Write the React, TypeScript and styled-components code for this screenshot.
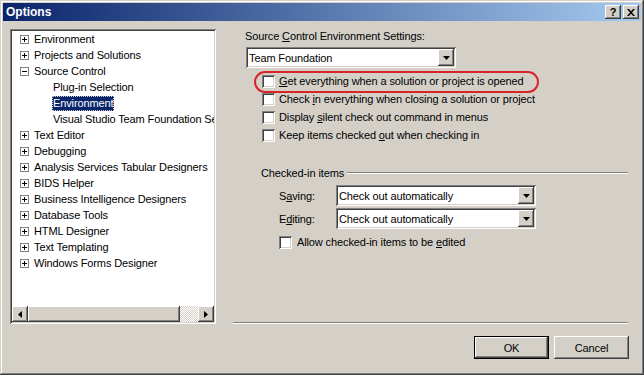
import React from "react";
import styled, { createGlobalStyle, css } from "styled-components";

const Global = createGlobalStyle`
  html, body { margin: 0; padding: 0; background: #d4d0c8; }
  body { font-family: "Liberation Sans", Arial, sans-serif; font-size: 11px; letter-spacing: -0.12px; color: #000; }
  * { box-sizing: border-box; }
`;

const raised = css`
  background: #d4d0c8;
  box-shadow: inset -1px -1px #404040, inset 1px 1px #fff, inset -2px -2px #808080;
`;

const sunken = css`
  box-shadow: inset 1px 1px #808080, inset -1px -1px #fff, inset 2px 2px #404040, inset -2px -2px #d4d0c8;
`;

const Window = styled.div`
  width: 644px;
  height: 375px;
  padding: 3px;
  display: flex;
  flex-direction: column;
  background: #d4d0c8;
  box-shadow: inset -1px -1px #404040, inset 1px 1px #d4d0c8, inset -2px -2px #808080, inset 2px 2px #fff;
`;

const TitleBar = styled.div`
  height: 18px;
  display: flex;
  align-items: center;
  padding: 0 2px 0 3px;
  background: linear-gradient(90deg, #0a246a 0%, #a6caf0 100%);
  color: #fff;
  font-weight: bold;
  font-size: 12px;
  letter-spacing: 0;
`;

const TitleText = styled.span`
  flex: 1;
`;

const CaptionButtons = styled.div`
  display: flex;
  gap: 2px;
`;

const CaptionButton = styled.div`
  ${raised};
  width: 16px;
  height: 14px;
  display: flex;
  align-items: center;
  justify-content: center;
  color: #000;
  font-size: 11px;
  font-weight: bold;
  line-height: 1;
`;

const Body = styled.div`
  display: flex;
  margin-top: 8px;
  padding-left: 7px;
  height: 295px;
`;

const Tree = styled.div`
  ${sunken};
  width: 206px;
  height: 295px;
  background: #fff;
  padding: 2px;
  display: flex;
  flex-direction: column;
`;

const TreeList = styled.ul`
  flex: 1;
  list-style: none;
  margin: 0;
  padding: 0;
  overflow: hidden;
`;

const TreeRow = styled.li<{ $child?: boolean }>`
  height: 16px;
  display: flex;
  align-items: center;
  padding-left: ${(p) => (p.$child ? 40 : 8)}px;
  white-space: nowrap;
`;

const Expander = styled.span`
  width: 9px;
  height: 9px;
  border: 1px solid #808080;
  background: #fff;
  display: flex;
  align-items: center;
  justify-content: center;
  margin-right: 4px;
  flex: none;
`;

const TreeLabel = styled.span<{ $selected?: boolean }>`
  padding: 1px 1px;
  line-height: 13px;
  background: ${(p) => (p.$selected ? "#0a246a" : "transparent")};
  color: ${(p) => (p.$selected ? "#fff" : "#000")};
  outline: ${(p) => (p.$selected ? "1px dotted #d4d0c8" : "none")};
  outline-offset: -1px;
`;

const HScroll = styled.div`
  height: 16px;
  display: flex;
  flex: none;
`;

const ScrollButton = styled.div`
  ${raised};
  width: 16px;
  height: 16px;
  display: flex;
  align-items: center;
  justify-content: center;
`;

const Thumb = styled.div`
  ${raised};
  width: 152px;
  height: 16px;
`;

const Track = styled.div`
  flex: 1;
  background-color: #fff;
  background-image: repeating-conic-gradient(#d4d0c8 0 25%, #fff 0 50%);
  background-size: 2px 2px;
`;

const Right = styled.div`
  margin-left: 17px;
  width: 395px;
  display: flex;
  flex-direction: column;
  position: relative;
`;

const SectionLabel = styled.div`
  margin: 1px 0 0 12px;
  line-height: 13px;
`;

const Combo = styled.div<{ $width: number }>`
  ${sunken};
  width: ${(p) => p.$width}px;
  height: 21px;
  background: #fff;
  padding: 2px;
  display: flex;
  align-items: center;
`;

const ComboText = styled.span`
  flex: 1;
  padding-left: 1px;
  white-space: nowrap;
`;

const ComboButton = styled.div`
  ${raised};
  width: 16px;
  height: 17px;
  display: flex;
  align-items: center;
  justify-content: center;
`;

const TopCombo = styled.div`
  margin: 4px 0 0 13px;
`;

const CheckList = styled.div`
  margin-top: 4px;
  display: flex;
  flex-direction: column;
`;

const CheckRow = styled.label<{ $indent: number; $gap: number }>`
  height: 18px;
  display: flex;
  align-items: center;
  padding-left: ${(p) => p.$indent}px;
  gap: ${(p) => p.$gap}px;
  white-space: nowrap;
`;

const Box = styled.span`
  ${sunken};
  width: 13px;
  height: 13px;
  background: #fff;
  flex: none;
`;

const Highlight = styled.div`
  position: absolute;
  left: 21px;
  top: 42px;
  width: 285px;
  height: 22px;
  border: 2px solid #d9242a;
  border-radius: 11px;
  pointer-events: none;
`;

const Key = styled.span`
  text-decoration: underline;
`;

const GroupHeader = styled.div`
  margin-top: 21px;
  height: 16px;
  padding-left: 28px;
  display: flex;
  align-items: center;
`;

const GroupLine = styled.div`
  flex: 1;
  margin-left: 3px;
  border-top: 1px solid #808080;
  border-bottom: 1px solid #fff;
`;

const FieldRow = styled.div<{ $top: number }>`
  margin-top: ${(p) => p.$top}px;
  padding-left: 46px;
  display: flex;
  align-items: center;
`;

const FieldLabel = styled.span`
  width: 57px;
`;

const Separator = styled.div`
  margin-top: auto;
  border-top: 1px solid #808080;
  border-bottom: 1px solid #fff;
`;

const Footer = styled.div`
  margin-top: 12px;
  padding-right: 12px;
  display: flex;
  justify-content: flex-end;
  gap: 5px;
`;

const Button = styled.button<{ $default?: boolean }>`
  width: 75px;
  height: 23px;
  border: none;
  padding: 0;
  font: inherit;
  letter-spacing: inherit;
  color: #000;
  background: #d4d0c8;
  box-shadow: ${(p) =>
    p.$default
      ? "inset 0 0 0 1px #000, inset -2px -2px #404040, inset 2px 2px #fff, inset -3px -3px #808080"
      : "inset -1px -1px #404040, inset 1px 1px #fff, inset -2px -2px #808080"};
`;

const Plus = ({ open }: { open?: boolean }) => (
  <svg width="7" height="7" viewBox="0 0 7 7">
    <rect x="1" y="3" width="5" height="1" fill="#000" />
    {!open && <rect x="3" y="1" width="1" height="5" fill="#000" />}
  </svg>
);

const Arrow = ({ dir }: { dir: "left" | "right" | "down" }) => {
  if (dir === "down")
    return (
      <svg width="7" height="4" viewBox="0 0 7 4">
        <path d="M0 0h7L3.5 4z" fill="#000" />
      </svg>
    );
  return (
    <svg width="4" height="7" viewBox="0 0 4 7">
      {dir === "left" ? <path d="M4 0v7L0 3.5z" fill="#000" /> : <path d="M0 0v7l4-3.5z" fill="#000" />}
    </svg>
  );
};

const CloseGlyph = () => (
  <svg width="8" height="7" viewBox="0 0 8 7">
    <path d="M0 0h2l2 2.3L6 0h2L5 3.5 8 7H6L4 4.7 2 7H0l3-3.5z" fill="#000" />
  </svg>
);

type Node = { label: string; child?: boolean; open?: boolean; selected?: boolean };

const nodes: Node[] = [
  { label: "Environment" },
  { label: "Projects and Solutions" },
  { label: "Source Control", open: true },
  { label: "Plug-in Selection", child: true },
  { label: "Environment", child: true, selected: true },
  { label: "Visual Studio Team Foundation Server", child: true },
  { label: "Text Editor" },
  { label: "Debugging" },
  { label: "Analysis Services Tabular Designers" },
  { label: "BIDS Helper" },
  { label: "Business Intelligence Designers" },
  { label: "Database Tools" },
  { label: "HTML Designer" },
  { label: "Text Templating" },
  { label: "Windows Forms Designer" },
];

const Dropdown = ({ width, value }: { width: number; value: string }) => (
  <Combo $width={width}>
    <ComboText>{value}</ComboText>
    <ComboButton>
      <Arrow dir="down" />
    </ComboButton>
  </Combo>
);

export default function App() {
  return (
    <>
      <Global />
      <Window>
        <TitleBar>
          <TitleText>Options</TitleText>
          <CaptionButtons>
            <CaptionButton>?</CaptionButton>
            <CaptionButton>
              <CloseGlyph />
            </CaptionButton>
          </CaptionButtons>
        </TitleBar>
        <Body>
          <Tree>
            <TreeList>
              {nodes.map((n, i) => (
                <TreeRow key={i} $child={n.child}>
                  {!n.child && (
                    <Expander>
                      <Plus open={n.open} />
                    </Expander>
                  )}
                  <TreeLabel $selected={n.selected}>{n.label}</TreeLabel>
                </TreeRow>
              ))}
            </TreeList>
            <HScroll>
              <ScrollButton>
                <Arrow dir="left" />
              </ScrollButton>
              <Thumb />
              <Track />
              <ScrollButton>
                <Arrow dir="right" />
              </ScrollButton>
            </HScroll>
          </Tree>
          <Right>
            <SectionLabel>
              Source <Key>C</Key>ontrol Environment Settings:
            </SectionLabel>
            <TopCombo>
              <Dropdown width={210} value="Team Foundation" />
            </TopCombo>
            <CheckList>
              <CheckRow $indent={29} $gap={4}>
                <Box />
                <span>
                  <Key>G</Key>et everything when a solution or project is opened
                </span>
              </CheckRow>
              <CheckRow $indent={29} $gap={4}>
                <Box />
                <span>
                  Check <Key>i</Key>n everything when closing a solution or project
                </span>
              </CheckRow>
              <CheckRow $indent={29} $gap={4}>
                <Box />
                <span>
                  Display <Key>s</Key>ilent check out command in menus
                </span>
              </CheckRow>
              <CheckRow $indent={29} $gap={4}>
                <Box />
                <span>
                  Keep items checked <Key>o</Key>ut when checking in
                </span>
              </CheckRow>
            </CheckList>
            <Highlight />
            <GroupHeader>
              <span>Checked-in items</span>
              <GroupLine />
            </GroupHeader>
            <FieldRow $top={4}>
              <FieldLabel>
                S<Key>a</Key>ving:
              </FieldLabel>
              <Dropdown width={200} value="Check out automatically" />
            </FieldRow>
            <FieldRow $top={2}>
              <FieldLabel>
                E<Key>d</Key>iting:
              </FieldLabel>
              <Dropdown width={200} value="Check out automatically" />
            </FieldRow>
            <CheckList>
              <CheckRow $indent={46} $gap={5}>
                <Box />
                <span>
                  Allow checked-in items to be <Key>e</Key>dited
                </span>
              </CheckRow>
            </CheckList>
            <Separator />
          </Right>
        </Body>
        <Footer>
          <Button $default>OK</Button>
          <Button>Cancel</Button>
        </Footer>
      </Window>
    </>
  );
}
